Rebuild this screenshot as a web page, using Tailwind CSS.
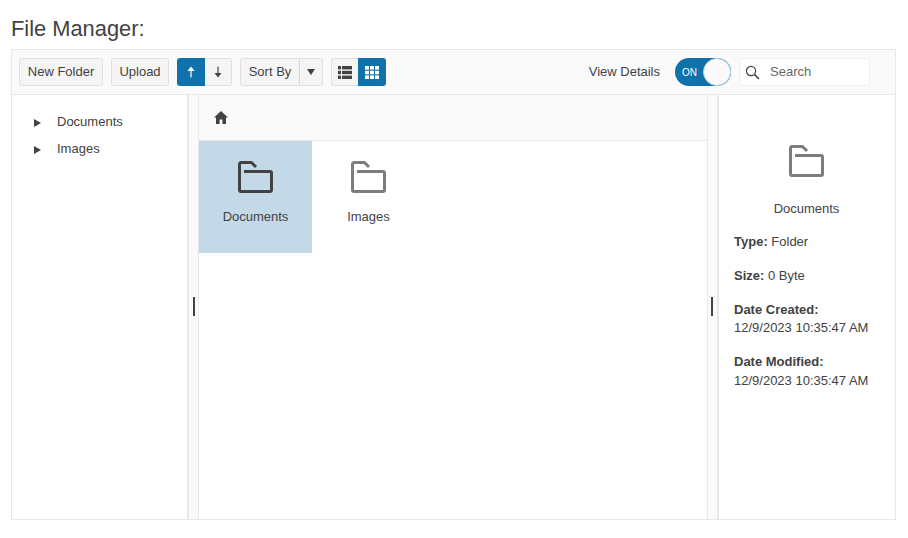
<!DOCTYPE html>
<html><head><meta charset="utf-8"><script src="https://cdn.jsdelivr.net/npm/@tailwindcss/browser@4"></script></head>
<body class="bg-white">
<div class="w-[908px] h-[538px] overflow-hidden pt-[15px] pl-[11px] font-['Liberation_Sans',Arial,sans-serif] text-[13px] text-[#424242]">
<h1 class="text-[21.85px] leading-[27px] h-[34px] m-0 font-normal text-[#424242]">File Manager:</h1>
<div class="w-[885px] h-[471px] border border-[#e8e8e8] flex flex-col">
  <div class="h-[45px] shrink-0 bg-[#fafafa] border-b border-[#e8e8e8] flex items-center pl-[7px] pr-[25px]">
    <button class="h-[28px] w-[84px] rounded-[3px] border border-[#e0e0e0] bg-[#f5f5f5]">New Folder</button>
    <button class="h-[28px] w-[58px] ml-[8px] rounded-[3px] border border-[#e0e0e0] bg-[#f5f5f5]">Upload</button>
    <div class="h-[28px] w-[55px] ml-[8px] flex">
      <div class="w-[28px] bg-[#1072ab] rounded-l-[3px] flex items-center justify-center">
        <svg width="10" height="12" viewBox="0 0 10 12" fill="none" stroke="#fff" stroke-width="1.2" class="ml-[-1px]"><path d="M5 11.5V3"/><path d="M1.5 5L5 0.5L8.500 5" fill="#fff" stroke="none"/></svg>
      </div>
      <div class="flex-1 border border-l-0 border-[#e0e0e0] bg-[#f5f5f5] rounded-r-[3px] flex items-center justify-center">
        <svg width="10" height="12" viewBox="0 0 10 12" fill="none" stroke="#424242" stroke-width="1.2"><path d="M5 0.5V9"/><path d="M1.5 7L5 11.500L8.500 7" fill="#424242" stroke="none"/></svg>
      </div>
    </div>
    <div class="h-[28px] w-[83px] ml-[8px] flex rounded-[3px] border border-[#e0e0e0] bg-[#f5f5f5]">
      <div class="w-[59px] border-r border-[#d8d8d8] flex items-center justify-center">Sort By</div>
      <div class="flex-1 flex items-center justify-center">
        <svg width="8" height="6" viewBox="0 0 8 6"><path d="M0 0h8L4 6z" fill="#424242"/></svg>
      </div>
    </div>
    <div class="h-[28px] w-[55px] ml-[8px] flex">
      <div class="w-[27px] border border-r-0 border-[#e0e0e0] bg-[#f5f5f5] rounded-l-[3px] flex items-center justify-center">
        <svg width="14" height="13" viewBox="0 0 14 13" fill="#424242"><rect y="0" width="3" height="3.4"/><rect x="4" y="0" width="10" height="3.4"/><rect y="4.8" width="3" height="3.400"/><rect x="4" y="4.800" width="10" height="3.400"/><rect y="9.600" width="3" height="3.400"/><rect x="4" y="9.600" width="10" height="3.400"/></svg>
      </div>
      <div class="flex-1 bg-[#1072ab] rounded-r-[3px] flex items-center justify-center">
        <svg width="14" height="13" viewBox="0 0 14 13" fill="#fff"><rect width="4" height="3.6"/><rect x="5" width="4" height="3.6"/><rect x="10" width="4" height="3.6"/><rect y="4.7" width="4" height="3.6"/><rect x="5" y="4.7" width="4" height="3.6"/><rect x="10" y="4.7" width="4" height="3.6"/><rect y="9.4" width="4" height="3.6"/><rect x="5" y="9.4" width="4" height="3.6"/><rect x="10" y="9.4" width="4" height="3.6"/></svg>
      </div>
    </div>
    <span class="ml-auto">View Details</span>
    <div class="ml-[15px] w-[56px] h-[28px] rounded-full bg-[#1072ab] relative flex items-center">
      <span class="ml-[7px] text-[10px] font-medium text-white">ON</span>
      <div class="absolute right-0 top-0 w-[28px] h-[28px] rounded-full bg-[#fafafa] border border-[#b9d3e4]"></div>
    </div>
    <div class="ml-[8px] w-[131px] h-[28px] rounded-[3px] border border-[#eeeeee] bg-white flex items-center pl-[5px] text-[#666666]">
      <svg width="15" height="15" viewBox="0 0 15 15" fill="none" stroke="#424242" stroke-width="1.2"><circle cx="6" cy="6" r="4.6"/><path d="M9.4 9.4L14 14" stroke-width="1.6"/></svg>
      <span class="ml-[10px]">Search</span>
    </div>
  </div>
  <div class="flex-1 flex min-h-0">
    <div class="w-[175px] shrink-0 pt-[13px] pl-[22px]">
      <div class="h-[27px] flex items-center"><svg width="7" height="8" viewBox="0 0 7 8" class="mt-[2px]"><path d="M0 0l7 4-7 4z" fill="#424242"/></svg><span class="ml-[16px]">Documents</span></div>
      <div class="h-[27px] flex items-center"><svg width="7" height="8" viewBox="0 0 7 8" class="mt-[2px]"><path d="M0 0l7 4-7 4z" fill="#424242"/></svg><span class="ml-[16px]">Images</span></div>
    </div>
    <div class="w-[12px] shrink-0 bg-[#fafafa] border-l-2 border-r border-[#e8e8e8] flex items-center justify-center">
      <div class="w-[2px] h-[19px] bg-[#424242] mt-[-2px] ml-[1px]"></div>
    </div>
    <div class="w-[508px] shrink-0 flex flex-col">
      <div class="h-[46px] shrink-0 bg-[#fafafa] border-b border-[#e8e8e8] flex items-center pl-[16px]">
        <svg width="14" height="13" viewBox="0 0 14 13" fill="#424242" class="mt-[-1px] ml-[-1px]"><path d="M7 0L0 6.6h2V13h3.6V8.6h2.8V13H12V6.6h2z"/></svg>
      </div>
      <div class="flex">
        <div class="w-[113px] h-[112px] bg-[#c3d9e7] flex flex-col items-center pt-[20px]">
          <svg width="35" height="33" viewBox="0 0 35 33" fill="none" stroke="#424242" stroke-width="3" stroke-linejoin="round"><path d="M6 10.500H32a1.500 1.500 0 0 1 1.500 1.500V29a1.500 1.500 0 0 1-1.500 1.500H3a1.500 1.500 0 0 1-1.500-1.500V3a1.500 1.500 0 0 1 1.500-1.500H13.500L18 6"/></svg>
          <span class="mt-[14px] leading-[17px]">Documents</span>
        </div>
        <div class="w-[113px] h-[112px] flex flex-col items-center pt-[20px]">
          <svg width="35" height="33" viewBox="0 0 35 33" fill="none" stroke="#7d7d7d" stroke-width="3" stroke-linejoin="round"><path d="M6 10.500H32a1.500 1.500 0 0 1 1.500 1.500V29a1.500 1.500 0 0 1-1.500 1.500H3a1.500 1.500 0 0 1-1.500-1.500V3a1.500 1.500 0 0 1 1.500-1.500H13.500L18 6"/></svg>
          <span class="mt-[14px] leading-[17px]">Images</span>
        </div>
      </div>
    </div>
    <div class="w-[12px] shrink-0 bg-[#fafafa] border-l border-r-2 border-[#e8e8e8] flex items-center justify-center">
      <div class="w-[2px] h-[19px] bg-[#424242] mt-[-2px] ml-[-1px]"></div>
    </div>
    <div class="flex-1 flex flex-col pl-[15px] min-w-0">
      <div class="flex flex-col items-center pr-[16px] pt-[50px]">
        <svg width="35" height="33" viewBox="0 0 35 33" fill="none" stroke="#7d7d7d" stroke-width="3" stroke-linejoin="round"><path d="M6 10.500H32a1.500 1.500 0 0 1 1.500 1.500V29a1.500 1.500 0 0 1-1.500 1.500H3a1.500 1.500 0 0 1-1.500-1.500V3a1.500 1.500 0 0 1 1.500-1.500H13.500L18 6"/></svg>
        <span class="mt-[22px] leading-[17px]">Documents</span>
      </div>
      <div class="mt-[16px] leading-[17px]"><b>Type:</b> Folder</div>
      <div class="mt-[17px] leading-[17px]"><b>Size:</b> 0 Byte</div>
      <div class="mt-[17px] leading-[18px]"><b>Date Created:</b><br>12/9/2023 10:35:47 AM</div>
      <div class="mt-[15px] leading-[19px]"><b>Date Modified:</b><br>12/9/2023 10:35:47 AM</div>
    </div>
  </div>
</div>
</div>
</body></html>
